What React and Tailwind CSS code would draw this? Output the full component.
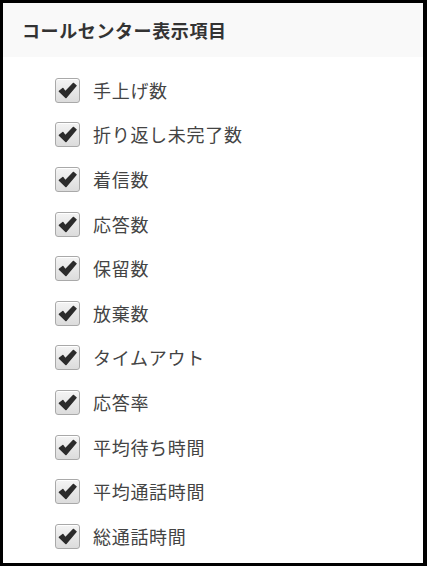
import React from "react";

const items = [
  "手上げ数",
  "折り返し未完了数",
  "着信数",
  "応答数",
  "保留数",
  "放棄数",
  "タイムアウト",
  "応答率",
  "平均待ち時間",
  "平均通話時間",
  "総通話時間",
];

function CheckBox() {
  return (
    <div className="w-[25px] h-[25px] rounded-[3px] border border-[#a9a9a9] bg-gradient-to-b from-[#f4f4f4] to-[#dcdcdc] flex items-center justify-center shadow-[inset_0_1px_0_#fff]">
      <svg width="19" height="17" viewBox="0 0 18 16">
        <path
          d="M1.2 8.8 L4.6 6 L7 9.2 L14.5 1.2 L17.2 3.4 L7.6 14.8 Z"
          fill="#2b2b2b"
          stroke="#2b2b2b"
          strokeWidth="1.2"
          strokeLinejoin="round"
        />
      </svg>
    </div>
  );
}

export default function App() {
  return (
    <div
      className="w-[427px] h-[566px] bg-white border-[3px] border-r-[4px] border-black overflow-hidden"
      style={{ fontFamily: '"Noto Sans CJK JP", "Noto Sans", sans-serif' }}
    >
      <div className="h-[54px] bg-[#f9f9f9] flex items-center pl-[19px]">
        <h2 className="text-[18px] font-bold text-[#333] tracking-[0.6px]">コールセンター表示項目</h2>
      </div>
      <ul className="pt-[11px] pl-[52px] flex flex-col">
        {items.map((label) => (
          <li key={label} className="h-[44.6px] flex items-center gap-[13px]">
            <CheckBox />
            <span className="text-[18px] text-[#444] tracking-[0.7px]">{label}</span>
          </li>
        ))}
      </ul>
    </div>
  );
}
